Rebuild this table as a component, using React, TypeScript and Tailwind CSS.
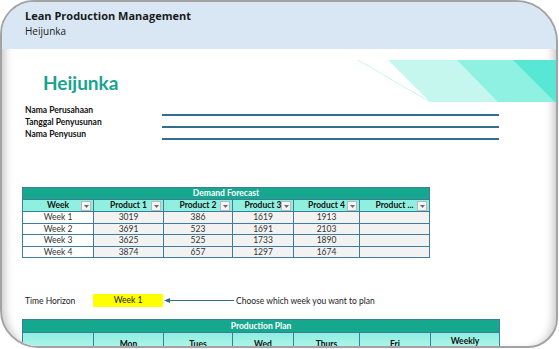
const cols = [
  { w: 71, label: "Week" },
  { w: 70, label: "Product 1" },
  { w: 69, label: "Product 2" },
  { w: 61, label: "Product 3" },
  { w: 66, label: "Product 4" },
  { w: 70, label: "Product ..." },
];

const rows = [
  ["Week 1", "3019", "386", "1619", "1913", ""],
  ["Week 2", "3691", "523", "1691", "2103", ""],
  ["Week 3", "3625", "525", "1733", "1890", ""],
  ["Week 4", "3874", "657", "1297", "1674", ""],
];

const planCols = [
  { w: 71, label: "" },
  { w: 70, label: "Mon" },
  { w: 69, label: "Tues" },
  { w: 61, label: "Wed" },
  { w: 66, label: "Thurs" },
  { w: 71, label: "Fri" },
  { w: 69, label: "Weekly" },
];

function FilterButton() {
  return (
    <div className="absolute right-[2px] top-[1px] w-[10px] h-[10px] bg-[#f4f4f4] border border-[#b9b9b9] flex items-center justify-center">
      <svg width="5" height="3" viewBox="0 0 5 3">
        <path d="M0 0 L5 0 L2.5 3 Z" fill="#6b6b6b" />
      </svg>
    </div>
  );
}

export default function App() {
  return (
    <div className="w-[559px] h-[349px] bg-white">
      <div
        className="relative w-[558px] h-[348px] overflow-hidden border-2 border-[#a3a3a3] rounded-tl-[34px] rounded-tr-[42px] rounded-bl-[38px] rounded-br-[30px] bg-white shadow-[inset_9px_0_8px_-6px_rgba(0,0,0,0.22),inset_-9px_0_8px_-6px_rgba(0,0,0,0.22)]"
        style={{ fontFamily: "Lato, 'Noto Sans', sans-serif" }}
      >
        {/* Header band */}
        <div className="h-[47px] bg-[#d9e7f5] pl-[23px] pt-[6px]" style={{ fontFamily: "'Open Sans', sans-serif" }}>
          <div className="text-[11px] leading-[16px] font-bold text-[#1a1a1a]">Lean Production Management</div>
          <div className="text-[10px] leading-[14px] text-[#1a1a1a]">Heijunka</div>
        </div>

        {/* Decorative stripes */}
        <svg className="absolute left-[338px] top-[58px]" width="220" height="43" viewBox="0 0 220 43">
          <line x1="18" y1="0" x2="90" y2="42" stroke="#c8f6ef" strokeWidth="1" />
          <polygon points="48,0 220,0 220,42 90,42" fill="#c5f7ef" />
          <polygon points="117,0 220,0 220,42 158,42" fill="#8ff1e1" />
          <polygon points="173,0 220,0 220,42 215,42" fill="#58e6d5" />
        </svg>

        {/* Title */}
        <div className="mt-[22px] pl-[41px] text-[19px] leading-[24px] font-bold text-[#16a48e]">Heijunka</div>

        {/* Info fields */}
        <div className="mt-[8.5px] pl-[23px] flex flex-col">
          {["Nama Perusahaan", "Tanggal Penyusunan", "Nama Penyusun"].map((l) => (
            <div key={l} className="flex h-[12px]">
              <div className="w-[137px] text-[8.5px] leading-[12px] font-bold text-[#111]">{l}</div>
              <div className="w-[337px] border-b-2 border-[#336e8e]" />
            </div>
          ))}
        </div>

        {/* Demand Forecast */}
        <div className="mt-[47.5px] ml-[20px] w-[408px] border-l border-t border-[#3f7b9b]">
          <div className="h-[11px] bg-[#15a88f] border-r border-[#3f7b9b] text-white text-[8.5px] leading-[11px] font-bold text-center">
            Demand Forecast
          </div>
          <div className="flex">
            {cols.map((c) => (
              <div
                key={c.label}
                className="relative h-[13px] bg-[#8ff0e0] border-r border-b border-t border-[#3f7b9b] text-[8.5px] leading-[11px] font-bold text-center text-[#111]"
                style={{ width: c.w }}
              >
                {c.label}
                <FilterButton />
              </div>
            ))}
          </div>
          {rows.map((r) => (
            <div key={r[0]} className="flex">
              {r.map((v, i) => (
                <div
                  key={i}
                  className={`h-[11.6px] border-r border-b border-[#3f7b9b] text-[8.5px] leading-[10.6px] text-center text-[#333] ${
                    i === 0 ? "bg-white" : "bg-[#f2f2f2]"
                  }`}
                  style={{ width: cols[i].w }}
                >
                  {v}
                </div>
              ))}
            </div>
          ))}
        </div>

        {/* Time horizon */}
        <div className="mt-[36px] ml-[23px] flex items-center h-[13px] text-[8.5px] text-[#222]">
          <div className="w-[68px]">Time Horizon</div>
          <div className="w-[70px] h-[13px] bg-[#ffff00] text-center leading-[13px]">Week 1</div>
          <svg width="71" height="7" viewBox="0 0 71 7" className="ml-[1px]">
            <line x1="3" y1="3.5" x2="70" y2="3.5" stroke="#2f6b8c" strokeWidth="1" />
            <polygon points="0,3.5 6,1 6,6" fill="#2f6b8c" />
          </svg>
          <div className="ml-[1px]">Choose which week you want to plan</div>
        </div>

        {/* Production Plan */}
        <div className="mt-[12px] ml-[20px] w-[478px] border-l border-t border-[#3f7b9b]">
          <div className="h-[12px] bg-[#15a88f] border-r border-[#3f7b9b] text-white text-[8.5px] leading-[12px] font-bold text-center">
            Production Plan
          </div>
          <div className="flex">
            {planCols.map((c, i) => (
              <div
                key={i}
                className={`h-[23px] bg-gradient-to-b from-[#8cefe0] to-[#c2f6ee] border-r border-t border-[#3f7b9b] text-[8.5px] leading-[10px] font-bold text-center text-[#111] flex justify-center ${
                  i === 6 ? "items-start pt-[3px]" : "items-center"
                }`}
                style={{ width: c.w }}
              >
                {c.label}
              </div>
            ))}
          </div>
        </div>
      </div>
    </div>
  );
}
